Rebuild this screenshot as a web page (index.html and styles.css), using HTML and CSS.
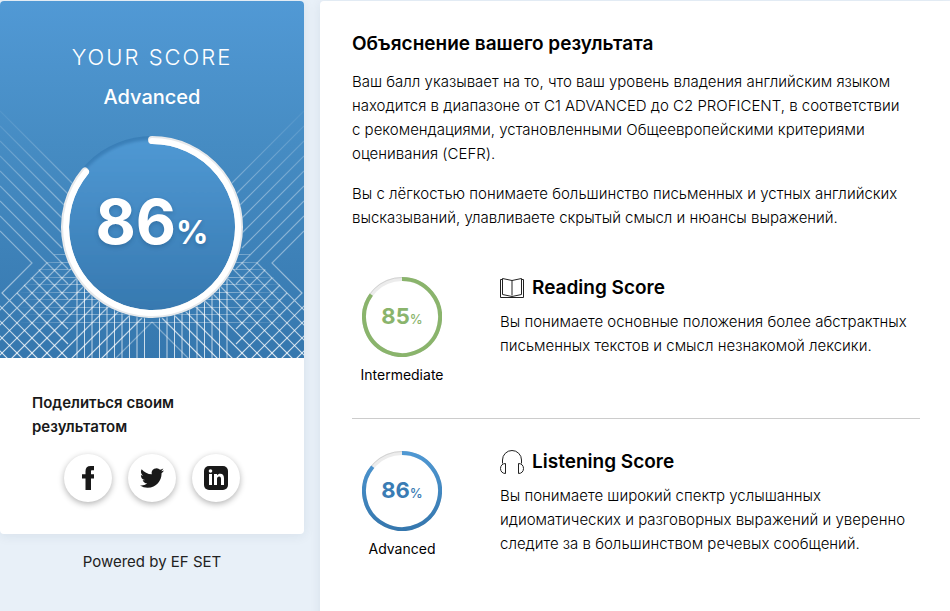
FILE: index.html
```html
<!DOCTYPE html>
<html lang="ru">
<head>
<meta charset="utf-8">
<title>EF SET</title>
<link rel="stylesheet" href="styles.css">
</head>
<body>
<div class="page">
  <aside class="side">
    <section class="card">
      <div class="hero">
        <svg class="pattern" viewBox="0 0 304 357" preserveAspectRatio="xMidYMax slice" aria-hidden="true">
          <defs>
            <linearGradient id="fade" gradientUnits="userSpaceOnUse" x1="0" y1="110" x2="0" y2="357"><stop offset="0" stop-color="#fff" stop-opacity=".05"/><stop offset=".35" stop-color="#fff" stop-opacity=".35"/><stop offset=".6" stop-color="#fff" stop-opacity=".4"/><stop offset="1" stop-color="#fff" stop-opacity=".8"/></linearGradient>
            <linearGradient id="rows" gradientUnits="userSpaceOnUse" x1="16" y1="0" x2="288" y2="0"><stop offset="0" stop-color="#fff" stop-opacity="0"/><stop offset=".25" stop-color="#fff" stop-opacity=".45"/><stop offset=".75" stop-color="#fff" stop-opacity=".45"/><stop offset="1" stop-color="#fff" stop-opacity="0"/></linearGradient>
            <g id="wing" fill="none" stroke="url(#fade)" stroke-width="1.2">
              <path d="M0 110L78 188M0 125L70 195M0 140L66 206M0 155L62 217M0 170L62 232M0 185L62 247M0 200L62 262L-34 358M0 215L47 262L-49 358M0 230L32 262L2 292L68 358"/>
              <path d="M77 262L-19 358M92 262L-4 358M92 277L11 358M92 292L26 358M107 292L41 358M112 302L56 358M122 307L71 358M130 314L86 358M142 317L101 358"/>
              <path d="M62 262L68 268M47 262L68 283M39 269L68 298M32 277L68 313M24 284L68 328M17 292L68 343M-8 297L53 358M-8 312L38 358M-8 327L23 358M-8 342L8 358"/>
              <path d="M152 321L115 358" stroke-opacity=".5"/>
            </g>
          </defs>
          <use href="#wing"/>
          <use href="#wing" transform="translate(304 0) scale(-1 1)"/>
          <path d="M54 253.500H250M46 261.500H258M38 268.500H266M30 276.500H274M24 283.500H280M17 291.500H287M17 298.500H287" stroke="url(#rows)"/>
          <path d="M0 313.500H304M10 306.500H294M17 321.500H287" stroke="url(#rows)" stroke-opacity=".8"/>
          <path d="M77 278V357M92 290V357M107 298V357M122 304V357M137 310V357M167 310V357M182 304V357M197 298V357M212 290V357M227 278V357" stroke="#fff" stroke-opacity=".35" stroke-width="2"/>
          <path d="M84.500 285V357M99.500 295V357M114.500 302V357M129.500 308V357M144.500 315V357M159.500 315V357M174.500 308V357M189.500 302V357M204.500 295V357M219.500 285V357" stroke="#fff" stroke-opacity=".75"/>
        </svg>
        <h1 class="hero-title">YOUR SCORE</h1>
        <p class="hero-level">Advanced</p>
        <div class="gauge">
          <svg viewBox="0 0 184 184" aria-hidden="true">
            <defs>
              <linearGradient id="disc" x1="0" y1="0" x2="0" y2="1"><stop offset="0" stop-color="#4f98d3"/><stop offset="1" stop-color="#3577ae"/></linearGradient>
              <filter id="soft"><feGaussianBlur stdDeviation="1.500"/></filter>
            </defs>
            <circle cx="92" cy="92" r="91" fill="#3a7fb8"/>
            <circle cx="92" cy="94" r="89" fill="url(#disc)" filter="url(#soft)"/>
            <path d="M92 5A87 87 0 1 1 25 36.500" fill="none" stroke="#e7e9eb" stroke-width="8" stroke-linecap="round"/>
            <path d="M92 6A86 86 0 1 1 26 37" fill="none" stroke="#fff" stroke-width="6" stroke-linecap="round"/>
          </svg>
          <span class="gauge-value">86<small>%</small></span>
        </div>
      </div>
      <div class="share">
        <h2 class="share-title">Поделиться своим результатом</h2>
        <div class="share-list">
          <a class="share-link" href="#" aria-label="Facebook"><svg viewBox="0 0 24 24"><path d="M15 24H9.500V12.500H6V8.300H9.500V5.200C9.500 1.800 11.300 0 14.600 0H18V4.300H16.200C15.200 4.300 15 4.700 15 5.600V8.300H18V12.500H15Z"/></svg></a>
          <a class="share-link" href="#" aria-label="Twitter"><svg viewBox="0 0 24 24"><path d="M23.950 4.570a10 10 0 0 1-2.820.770 4.960 4.960 0 0 0 2.160-2.720c-.950.550-2 .950-3.130 1.180a4.920 4.920 0 0 0-8.380 4.480C7.690 8.090 4.070 6.130 1.640 3.160a4.820 4.820 0 0 0-.670 2.480c0 1.710.870 3.210 2.190 4.100a4.900 4.900 0 0 1-2.230-.620v.060a4.920 4.920 0 0 0 3.950 4.830 5 5 0 0 1-2.210.080 4.940 4.940 0 0 0 4.600 3.420A9.870 9.870 0 0 1 0 19.540a13.990 13.990 0 0 0 7.550 2.210c9.050 0 14-7.500 14-13.980 0-.210 0-.420-.020-.630a9.940 9.940 0 0 0 2.460-2.550z"/></svg></a>
          <a class="share-link" href="#" aria-label="LinkedIn"><svg viewBox="0 0 24 24"><rect width="24" height="24" rx="5"/><path fill="#fff" d="M5 8H8V19H5ZM10 8H13V9.500C13.700 8.400 14.800 7.800 16.200 7.800 19 7.800 20 9.600 20 12.400V19H17V13C17 11.500 16.500 10.500 15.200 10.500 13.800 10.500 13 11.400 13 13V19H10Z"/><circle cx="6.500" cy="5" r="1.800" fill="#fff"/></svg></a>
        </div>
      </div>
    </section>
    <p class="powered">Powered by EF SET</p>
  </aside>
  <main class="main">
    <h2 class="title">Объяснение вашего результата</h2>
    <p class="text">Ваш балл указывает на то, что ваш уровень владения английским языком находится в диапазоне от C1 ADVANCED до C2 PROFICENT, в соответствии с&nbsp;рекомендациями, установленными Общеевропейскими критериями оценивания (CEFR).</p>
    <p class="text">Вы с лёгкостью понимаете большинство письменных и устных английских высказываний, улавливаете скрытый смысл и нюансы выражений.</p>
    <section class="skill">
      <div class="result">
        <div class="ring ring-green">
          <svg viewBox="0 0 80 80" aria-hidden="true"><circle cx="40" cy="40" r="38" fill="none" stroke="#ececec" stroke-width="4"/><circle cx="40" cy="40" r="39.500" fill="none" stroke="#d2d2d2"/><path d="M40 2A38 38 0 1 1 9.300 17.700" fill="none" stroke="#8ab46c" stroke-width="4"/></svg>
          <span class="ring-value">85<small>%</small></span>
        </div>
        <p class="level">Intermediate</p>
      </div>
      <div class="detail">
        <h3 class="title skill-title"><svg viewBox="0 0 24 24" aria-hidden="true"><path d="M2.500 3.500H.500V21.500H23.500V3.500H21.500M12 4.500V19.500M12 4.500L2.500 2.500V18.500L12 20.500L21.500 18.500V2.500Z"/></svg>Reading Score</h3>
        <p class="text">Вы понимаете основные положения более абстрактных письменных текстов и смысл незнакомой лексики.</p>
      </div>
    </section>
    <section class="skill">
      <div class="result">
        <div class="ring ring-blue">
          <svg viewBox="0 0 80 80" aria-hidden="true"><circle cx="40" cy="40" r="38" fill="none" stroke="#ececec" stroke-width="4"/><circle cx="40" cy="40" r="39.500" fill="none" stroke="#d2d2d2"/><path d="M40 2A38 38 0 1 1 10.700 15.800" fill="none" stroke="url(#disc)" stroke-width="4"/></svg>
          <span class="ring-value">86<small>%</small></span>
        </div>
        <p class="level">Advanced</p>
      </div>
      <div class="detail">
        <h3 class="title skill-title"><svg viewBox="0 0 24 24" aria-hidden="true"><path d="M2.500 13.500V10A9.500 9.500 0 0 1 21.500 10V13.500M5.500 13.500V23.500C2.500 23.500.500 21.500.500 18.500S2.500 13.500 5.500 13.500ZM18.500 13.500V23.500C21.500 23.500 23.500 21.500 23.500 18.500S21.500 13.500 18.500 13.500Z"/></svg>Listening Score</h3>
        <p class="text">Вы понимаете широкий спектр услышанных идиоматических и разговорных выражений и уверенно следите за в большинством речевых сообщений.</p>
      </div>
    </section>
  </main>
</div>
</body>
</html>
```
FILE: styles.css
```css
* { box-sizing: border-box; }
body { margin: 0; background: #e8f0f8; color: #000; font: 300 15px/24px Inter, "Liberation Sans", sans-serif; }
h1, h2, h3, p { margin: 0; }
.page { display: flex; align-items: stretch; gap: 16px; min-height: 100vh; padding-top: 1px; }
.side { flex: 0 0 32%; }
.card { background: #fff; border-radius: 4px; overflow: hidden; box-shadow: 0 2px 12px rgba(25, 50, 80, .08); }
.hero { position: relative; display: flex; flex-direction: column; align-items: center; padding: 40px 16px 39px; color: #fff; background: linear-gradient(#5199d5, #468cc3 40%, #3577ae); }
.pattern { position: absolute; inset: 0; width: 100%; height: 100%; }
.hero-title { position: relative; font-size: 22px; line-height: 32px; font-weight: 300; letter-spacing: 2px; }
.hero-level { position: relative; margin: 8px 0 22px; font-size: 20px; line-height: 32px; font-weight: 500; }
.gauge { position: relative; display: grid; place-items: center; width: 184px; }
.gauge > * { grid-area: 1 / 1; }
.gauge svg { display: block; width: 100%; }
.gauge-value { position: relative; font-size: 62px; line-height: 64px; font-weight: 700; text-shadow: 0 2px 4px rgba(20, 60, 100, .3); }
.gauge-value small { font-size: 32px; }
.share { padding: 33px 32px 32px; }
.share-title { font-size: 15px; line-height: 24px; font-weight: 600; color: #191919; }
.share-list { display: flex; justify-content: center; gap: 16px; margin-top: 15px; }
.share-link { display: grid; place-items: center; width: 48px; height: 48px; border-radius: 50%; background: #fff; box-shadow: 0 2px 6px rgba(0, 0, 0, .3); }
.share-link svg { width: 24px; height: 24px; fill: #191919; }
.powered { margin-top: 16px; text-align: center; font-weight: 400; color: #222; }
.main { flex: 1; min-width: 0; padding: 31px 30px 40px 32px; background: #fff; border-radius: 4px 0 0; box-shadow: 0 2px 12px rgba(25, 50, 80, .08); }
.title { margin-bottom: 14px; font-size: 19px; line-height: 24px; font-weight: 600; }
.text + .text { margin-top: 16px; }
.skill { display: flex; gap: 48px; padding: 44px 0 31px; }
.skill + .skill { padding-top: 29px; border-top: 1px solid #ccc; }
.result { flex: 0 0 100px; text-align: center; }
.ring { display: grid; place-items: center; width: 80px; margin: 3px auto 6px; }
.ring > * { grid-area: 1 / 1; }
.ring svg { display: block; width: 100%; }
.ring-value { font-size: 22px; font-weight: 700; }
.ring-value small { font-size: 13px; font-weight: 500; }
.ring-green { color: #8ab46c; }
.ring-blue { color: #3a7cb4; }
.level { font-size: 14px; line-height: 24px; font-weight: 400; }
.detail { flex: 1; min-width: 0; padding-top: 2px; }
.skill-title { display: flex; align-items: center; gap: 8px; margin-bottom: 10px; }
.skill-title svg { width: 24px; height: 24px; fill: none; stroke: #222; }
```
